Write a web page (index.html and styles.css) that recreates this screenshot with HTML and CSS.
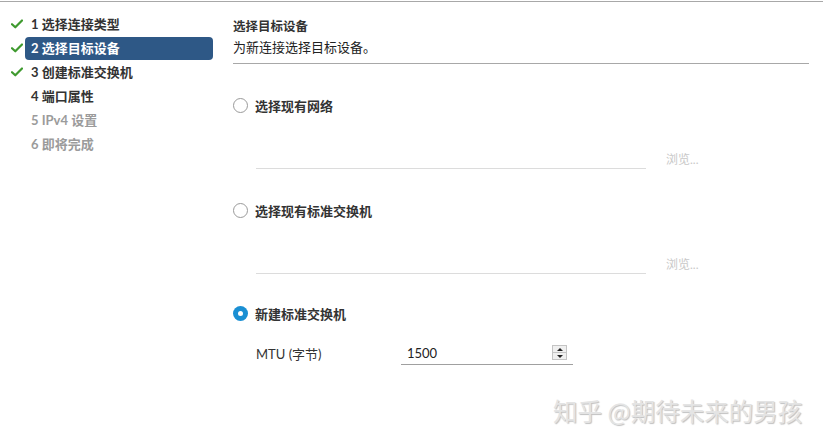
FILE: index.html
```html
<!DOCTYPE html>
<html lang="zh-CN">
<head>
<meta charset="utf-8">
<title>新建标准交换机</title>
<link rel="stylesheet" href="styles.css">
</head>
<body>
<div class="page">
  <nav class="steps">
    <div class="step done">
      <span class="check"><svg width="12" height="10" viewBox="0 0 12 10"><path d="M1 5.2 L4.3 8.3 L11 1.5" fill="none" stroke="#3f9a2f" stroke-width="2.2" stroke-linecap="round" stroke-linejoin="round"/></svg></span>
      <span class="label">1 选择连接类型</span>
    </div>
    <div class="step done active">
      <span class="check"><svg width="12" height="10" viewBox="0 0 12 10"><path d="M1 5.2 L4.3 8.3 L11 1.5" fill="none" stroke="#3f9a2f" stroke-width="2.2" stroke-linecap="round" stroke-linejoin="round"/></svg></span>
      <span class="label">2 选择目标设备</span>
    </div>
    <div class="step done">
      <span class="check"><svg width="12" height="10" viewBox="0 0 12 10"><path d="M1 5.2 L4.3 8.3 L11 1.5" fill="none" stroke="#3f9a2f" stroke-width="2.2" stroke-linecap="round" stroke-linejoin="round"/></svg></span>
      <span class="label">3 创建标准交换机</span>
    </div>
    <div class="step">
      <span class="check"></span>
      <span class="label">4 端口属性</span>
    </div>
    <div class="step disabled">
      <span class="check"></span>
      <span class="label">5 IPv4 设置</span>
    </div>
    <div class="step disabled">
      <span class="check"></span>
      <span class="label">6 即将完成</span>
    </div>
  </nav>

  <main class="content">
    <header class="head">
      <div class="title">选择目标设备</div>
      <div class="subtitle">为新连接选择目标设备。</div>
    </header>

    <div class="radio-row first">
      <span class="radio"></span>
      <span class="radio-label">选择现有网络</span>
    </div>
    <div class="field-row">
      <div class="line-input"></div>
      <span class="browse">浏览...</span>
    </div>

    <div class="radio-row">
      <span class="radio"></span>
      <span class="radio-label">选择现有标准交换机</span>
    </div>
    <div class="field-row">
      <div class="line-input"></div>
      <span class="browse">浏览...</span>
    </div>

    <div class="radio-row last">
      <span class="radio checked"></span>
      <span class="radio-label">新建标准交换机</span>
    </div>
    <div class="mtu-row">
      <span class="mtu-label">MTU (字节)</span>
      <div class="num-input">
        <span class="num-value">1500</span>
        <span class="spinner"><span class="up"></span><span class="down"></span></span>
      </div>
    </div>
  </main>
</div>
<div class="watermark">知乎 @期待未来的男孩</div>
</body>
</html>
```
FILE: styles.css
```css
html, body {
  margin: 0;
  padding: 0;
  background: #ffffff;
}
body {
  padding-top: 1px;
  font-family: "Lato", "Noto Sans CJK SC", sans-serif;
  color: #333333;
  width: 823px;
  height: 447px;
  overflow: hidden;
  position: relative;
}
.page {
  display: flex;
  border-top: 1px solid #a8a8a8;
  height: 446px;
}
.steps {
  width: 233px;
  flex: none;
  padding-top: 10px;
  display: flex;
  flex-direction: column;
}
.step {
  display: flex;
  align-items: center;
  height: 24px;
}
.check {
  width: 25px;
  flex: none;
  display: flex;
  justify-content: flex-start;
  padding-left: 11px;
  box-sizing: border-box;
}
.check svg { display: block; }
.label {
  width: 188px;
  height: 24px;
  line-height: 24px;
  padding-left: 6px;
  box-sizing: border-box;
  font-size: 13px;
  font-weight: 700;
  color: #333333;
  border-radius: 4px;
}
.step.active .label {
  background: #2e5886;
  color: #ffffff;
  height: 23px;
  line-height: 23px;
  margin-top: 1px;
}
.step.disabled .label {
  color: #9b9b9b;
}
.content {
  width: 576px;
  flex: none;
  display: flex;
  flex-direction: column;
}
.head {
  padding-top: 15px;
  padding-bottom: 6px;
  border-bottom: 1px solid #a8a8a8;
}
.title {
  font-size: 12.5px;
  font-weight: 700;
  line-height: 20px;
  color: #333;
}
.subtitle {
  font-size: 13px;
  line-height: 20px;
  color: #222;
}
.radio-row {
  display: flex;
  align-items: center;
  height: 20px;
  margin-top: 31px;
}
.radio-row.last { margin-top: 29px; }
.radio {
  width: 15px;
  height: 15px;
  box-sizing: border-box;
  border: 1px solid #9a9a9a;
  border-radius: 50%;
  background: #fff;
  flex: none;
  margin-right: 7px;
  display: flex;
  align-items: center;
  justify-content: center;
}
.radio.checked {
  border: none;
  background: #1a8fd3;
}
.radio.checked::after {
  content: "";
  width: 5px;
  height: 5px;
  border-radius: 50%;
  background: #ffffff;
}
.radio-label {
  font-size: 13px;
  font-weight: 700;
  color: #333;
}
.field-row {
  display: flex;
  align-items: center;
  margin-top: 30px;
  padding-left: 23px;
  height: 24px;
}
.line-input {
  width: 390px;
  height: 24px;
  box-sizing: border-box;
  border-bottom: 1px solid #dcdcdc;
}
.browse {
  margin-left: 20px;
  font-size: 12px;
  color: #c8c8c8;
  line-height: 20px;
  margin-top: 6px;
}
.mtu-row {
  display: flex;
  align-items: center;
  margin-top: 18px;
  padding-left: 23px;
  height: 24px;
}
.mtu-label {
  width: 145px;
  font-size: 13px;
  color: #333;
}
.num-input {
  width: 172px;
  height: 24px;
  box-sizing: border-box;
  border-bottom: 1px solid #a0a0a0;
  display: flex;
  align-items: center;
  justify-content: space-between;
  padding-left: 6px;
  padding-right: 6px;
}
.num-value {
  font-size: 13px;
  color: #222;
}
.spinner {
  width: 15px;
  height: 15px;
  box-sizing: border-box;
  border: 1px solid #c4c4c4;
  background: #f0f0f0;
  display: flex;
  flex-direction: column;
}
.spinner .up, .spinner .down {
  flex: 1;
  display: flex;
  align-items: center;
  justify-content: center;
}
.spinner .up { border-bottom: 1px solid #c4c4c4; }
.spinner .up::after {
  content: "";
  border-left: 3px solid transparent;
  border-right: 3px solid transparent;
  border-bottom: 3px solid #222;
}
.spinner .down::after {
  content: "";
  border-left: 3px solid transparent;
  border-right: 3px solid transparent;
  border-top: 3px solid #222;
}
.watermark {
  position: absolute;
  left: 553px;
  top: 395px;
  font-family: "Noto Sans CJK SC", sans-serif;
  font-size: 24.5px;
  line-height: 32px;
  color: #e4e4e4;
  text-shadow: 1px 1px 1px rgba(0, 0, 0, 0.25);
  white-space: nowrap;
}
```
